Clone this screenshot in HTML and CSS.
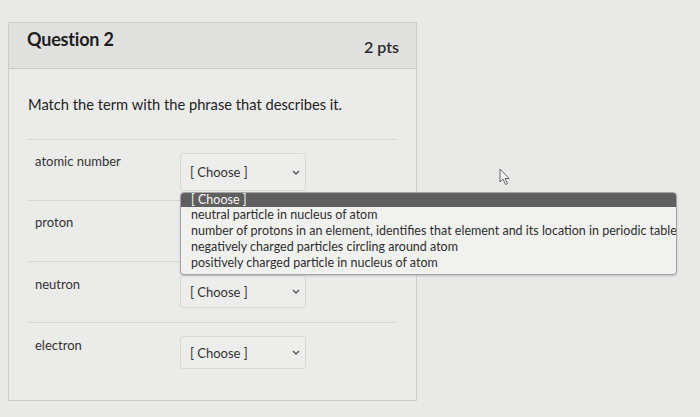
FILE: index.html
```html
<!DOCTYPE html>
<html>
<head>
<meta charset="utf-8">
<link rel="stylesheet" href="styles.css">
</head>
<body>
<div class="page">
  <div class="card">
    <div class="card-header">
      <h2 class="title">Question 2</h2>
      <span class="pts">2 pts</span>
    </div>
    <div class="card-body">
      <p class="prompt">Match the term with the phrase that describes it.</p>
      <div class="rows">
        <div class="row">
          <span class="term">atomic number</span>
          <div class="select"><span>[ Choose ]</span><svg class="chev" viewBox="0 0 8 5" width="8" height="5"><path d="M1 1 L4 4 L7 1" fill="none" stroke="#555" stroke-width="1.4"/></svg></div>
        </div>
        <div class="row">
          <span class="term">proton</span>
          <div class="select covered"><span>[ Choose ]</span><svg class="chev" viewBox="0 0 8 5" width="8" height="5"><path d="M1 1 L4 4 L7 1" fill="none" stroke="#555" stroke-width="1.4"/></svg></div>
        </div>
        <div class="row">
          <span class="term">neutron</span>
          <div class="select"><span>[ Choose ]</span><svg class="chev" viewBox="0 0 8 5" width="8" height="5"><path d="M1 1 L4 4 L7 1" fill="none" stroke="#555" stroke-width="1.4"/></svg></div>
        </div>
        <div class="row last">
          <span class="term">electron</span>
          <div class="select"><span>[ Choose ]</span><svg class="chev" viewBox="0 0 8 5" width="8" height="5"><path d="M1 1 L4 4 L7 1" fill="none" stroke="#555" stroke-width="1.4"/></svg></div>
        </div>
      </div>
    </div>
  </div>
  <ul class="dropdown">
    <li class="opt selected">[ Choose ]</li>
    <li class="opt">neutral particle in nucleus of atom</li>
    <li class="opt">number of protons in an element, identifies that element and its location in periodic table</li>
    <li class="opt">negatively charged particles circling around atom</li>
    <li class="opt">positively charged particle in nucleus of atom</li>
  </ul>
  <svg class="cursor" viewBox="0 0 12 18" width="12" height="18"><path d="M1 1 L1 14 L4 11 L6.5 16.5 L8.5 15.5 L6 10.5 L10 10.5 Z" fill="#f4f4f4" stroke="#666" stroke-width="1" stroke-linejoin="round"/></svg>
</div>
</body>
</html>
```
FILE: styles.css
```css
* { box-sizing: border-box; }
html, body { margin: 0; padding: 0; }
body {
  background: #e9e9e8;
  font-family: Lato, "Liberation Sans", sans-serif;
  color: #2d2d2d;
  width: 700px;
  height: 417px;
  overflow: hidden;
}
.page {
  position: relative;
  width: 700px;
  height: 417px;
  padding: 22px 0 0 8px;
}
.card {
  width: 409px;
  height: 379px;
  border: 1px solid #cdcdcc;
  background: #ebebea;
}
.card-header {
  height: 46px;
  background: #e0e0df;
  border-bottom: 1px solid #c9c9c8;
  display: flex;
  justify-content: space-between;
  padding: 0 17px 0 18px;
}
.title {
  margin: 0;
  margin-top: 5px;
  font-size: 18px;
  font-weight: 700;
  color: #1e1e1e;
  letter-spacing: -0.2px;
}
.pts {
  margin-top: 14px;
  font-size: 16px;
  font-weight: 600;
  color: #2a2a2a;
}
.card-body {
  padding: 0 20px 0 19px;
}
.prompt {
  margin: 25px 0 0 0;
  font-size: 14.7px;
  color: #242424;
  line-height: 20px;
}
.rows {
  margin-top: 25px;
  border-top: 1px solid #d6d6d5;
}
.row {
  height: 61px;
  border-bottom: 1px solid #d6d6d5;
  display: flex;
  padding-left: 7px;
}
.row.last { border-bottom: none; }
.term {
  width: 145px;
  margin-top: 13px;
  font-size: 13px;
  color: #333;
}
.select {
  margin-top: 13px;
  width: 126px;
  height: 38px;
  border: 1px solid #d8d8d7;
  border-radius: 3px;
  background: #ededec;
  display: flex;
  align-items: center;
  justify-content: space-between;
  padding: 0 5px 0 9px;
  font-size: 13px;
  color: #333;
}
.select.covered { visibility: hidden; }
.row:nth-child(3) .select, .row:nth-child(4) .select { height: 33px; margin-top: 13px; }
.row:nth-child(3) .term, .row:nth-child(4) .term { margin-top: 14px; }
.dropdown {
  position: absolute;
  left: 180px;
  top: 192px;
  width: 497px;
  margin: 0;
  padding: 0 0 3px 0;
  list-style: none;
  background: #f1f1f0;
  border: 1px solid #a4a4a4;
  border-radius: 4px;
  overflow: hidden;
  box-shadow: 0 1px 2px rgba(0,0,0,0.2);
}
.opt {
  font-size: 12.5px;
  line-height: 16px;
  padding-left: 10px;
  color: #2e2e2e;
  white-space: nowrap;
}
.opt.selected {
  background: #5f5f5f;
  color: #f4f4f4;
  line-height: 14px;
  font-size: 12.5px;
}
.cursor {
  position: absolute;
  left: 499px;
  top: 168px;
}
```
